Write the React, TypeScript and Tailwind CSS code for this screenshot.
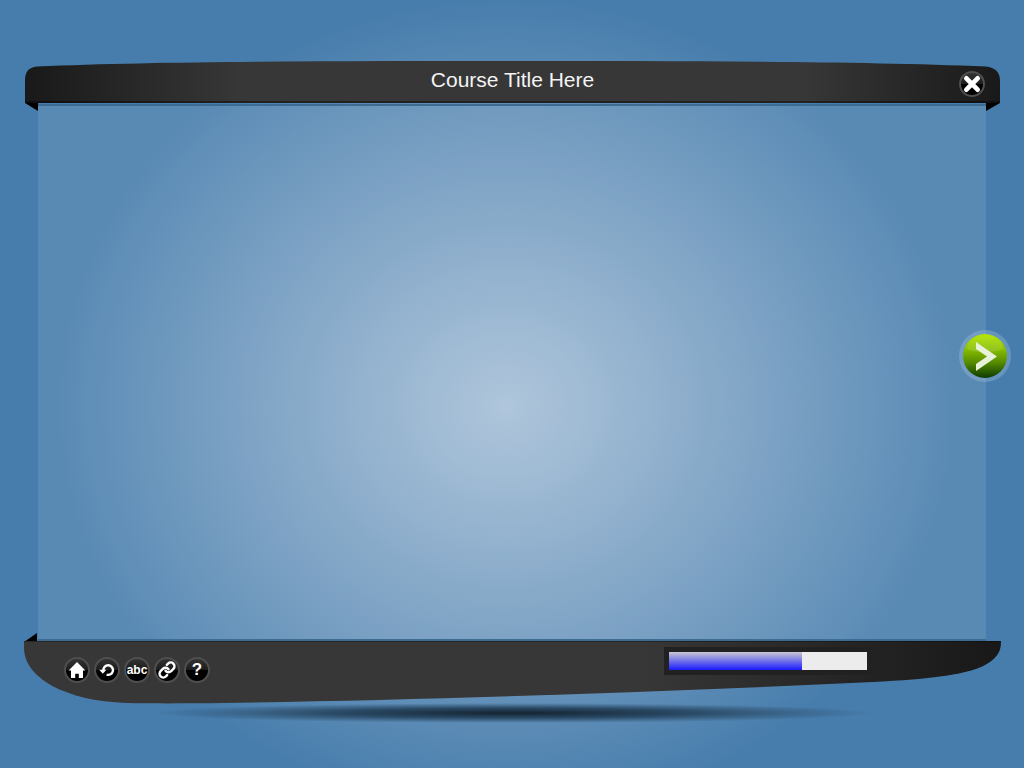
import type { ReactNode } from "react";
import { Link as ChainIcon } from "lucide-react";

type RoundButtonProps = { label: string; children: ReactNode };

function RoundButton({ label, children }: RoundButtonProps) {
  return (
    <button
      type="button"
      aria-label={label}
      className="flex size-[26px] shrink-0 items-center justify-center rounded-full border-2 border-[#4f4f4f] bg-linear-to-b from-[#343434] from-0% via-[#1c1c1c] via-50% to-black to-50% text-white"
    >
      {children}
    </button>
  );
}

function HomeIcon() {
  return (
    <svg viewBox="0 0 18 18" className="size-[18px] shrink-0" fill="currentColor" aria-hidden="true">
      <path d="M9 1 17.4 9.4H15V17H10.8V12.8H7.2V17H3V9.4H.6Z" />
    </svg>
  );
}

function ReplayIcon() {
  return (
    <svg viewBox="0 0 18 18" className="size-[18px] shrink-0" fill="none" aria-hidden="true">
      <path d="M5.4 9.4A4.8 4.8 0 1 1 8.6 13.6" stroke="currentColor" strokeWidth="2.4" />
      <path d="M1.2 8.8H8.4L4.8 12.8Z" fill="currentColor" />
    </svg>
  );
}

function CloseIcon() {
  return (
    <svg viewBox="0 0 18 18" className="size-[18px] shrink-0" fill="none" aria-hidden="true">
      <path d="M3.4 3.4 14.6 14.6M14.6 3.4 3.4 14.6" stroke="currentColor" strokeWidth="4.8" strokeLinecap="round" />
    </svg>
  );
}

function TitleBar() {
  return (
    <header className="relative flex h-[43px] items-center justify-center">
      <svg viewBox="0 0 977 43" preserveAspectRatio="none" className="absolute inset-0 size-full" aria-hidden="true">
        <defs>
          <linearGradient id="titleFill">
            <stop offset="0" stopColor="#191919" />
            <stop offset="0.22" stopColor="#373737" />
            <stop offset="0.8" stopColor="#373737" />
            <stop offset="1" stopColor="#191919" />
          </linearGradient>
        </defs>
        <path
          d="M1 42V20C1 11 4 6.5 13 5.5C140 0 330 0 488 0C646 0 830 0 962 5.5C971 6.5 976 11 976 20V42Z"
          fill="url(#titleFill)"
        />
        <path d="M1 40H976V42H1Z" fill="#000" fillOpacity="0.4" />
      </svg>
      <h1 className="relative pb-[6px] text-[21px] leading-6 text-[#f4f4f4]">Course Title Here</h1>
      <div className="absolute top-[10px] right-4">
        <RoundButton label="Close">
          <CloseIcon />
        </RoundButton>
      </div>
    </header>
  );
}

function Stage() {
  return (
    <section aria-label="Course content" className="relative mr-[15px] ml-[14px] flex-1 border-y-2 border-[#3d6b91] bg-white/10 bg-clip-padding">
      <svg viewBox="0 0 13 8" className="absolute -top-[3px] -left-[13px] h-2 w-[13px]" aria-hidden="true">
        <path d="M0 0H13V8Z" />
      </svg>
      <svg viewBox="0 0 14 8" className="absolute -top-[3px] -right-[14px] h-2 w-[14px]" aria-hidden="true">
        <path d="M0 0H14L0 8Z" />
      </svg>
      <svg viewBox="0 0 13 9" className="absolute -bottom-[3px] -left-[14px] h-[9px] w-[13px]" aria-hidden="true">
        <path d="M0 9 13 0V9Z" />
      </svg>
      <button type="button" aria-label="Next" className="absolute top-[42%] -right-[25px] size-[52px] rounded-full">
        <svg viewBox="0 0 52 52" className="size-full" aria-hidden="true">
          <defs>
            <linearGradient id="nextFill" x2="0" y2="1">
              <stop offset="0" stopColor="#b4e600" />
              <stop offset="0.35" stopColor="#86bd00" />
              <stop offset="0.65" stopColor="#568b00" />
              <stop offset="1" stopColor="#0d3a00" />
            </linearGradient>
            <linearGradient id="nextGloss" x2="0" y2="1">
              <stop offset="0" stopColor="#fff" stopOpacity="0.05" />
              <stop offset="1" stopColor="#fff" stopOpacity="0.14" />
            </linearGradient>
          </defs>
          <circle cx="26" cy="26" r="26" fill="#a9c4e4" fillOpacity="0.33" />
          <circle cx="26" cy="26" r="22" fill="url(#nextFill)" />
          <path d="M8 19C10 1 42 1 44 19C34 23 18 23 8 19Z" fill="url(#nextGloss)" />
          <path d="M17 12 38 26.5 17 41V34L28 26.5 17 19Z" fill="#e8f1d9" />
        </svg>
      </button>
    </section>
  );
}

function ControlBar({ progress }: { progress: number }) {
  return (
    <footer className="relative flex h-[63px] items-start justify-between pr-[129px] pl-10">
      <svg viewBox="0 0 977 63" preserveAspectRatio="none" className="absolute inset-0 size-full" aria-hidden="true">
        <defs>
          <linearGradient id="controlFill">
            <stop offset="0" stopColor="#373737" />
            <stop offset="0.63" stopColor="#373737" />
            <stop offset="1" stopColor="#181818" />
          </linearGradient>
        </defs>
        <path
          d="M0 0H977C977 10 974 15 966 21C948 34 905 38 849 41C640 51 400 59 200 62C160 62.5 120 62.5 103 62C40 60 0 36 0 7Z"
          fill="url(#controlFill)"
        />
        <path d="M0 0H977V1H0Z" fill="#000" fillOpacity="0.3" />
      </svg>
      <nav aria-label="Course tools" className="relative flex gap-1 pt-4">
        <RoundButton label="Home">
          <HomeIcon />
        </RoundButton>
        <RoundButton label="Replay">
          <ReplayIcon />
        </RoundButton>
        <RoundButton label="Glossary">
          <span className="text-[12px] leading-3 font-bold">abc</span>
        </RoundButton>
        <RoundButton label="Links">
          <ChainIcon className="size-[18px] shrink-0" strokeWidth={3.2} aria-hidden="true" />
        </RoundButton>
        <RoundButton label="Help">
          <span className="text-[17px] leading-4 font-bold">?</span>
        </RoundButton>
      </nav>
      <div className="relative mt-[6px] bg-[#212121] p-[5px]">
        <div
          role="progressbar"
          aria-label="Course progress"
          aria-valuenow={progress}
          aria-valuemin={0}
          aria-valuemax={100}
          className="h-[18px] w-[198px] bg-[#ececec]"
        >
          <div className="h-full bg-linear-to-b/srgb from-[#c8c8d2] to-[#1a1aff]" style={{ width: `${progress}%` }} />
        </div>
      </div>
    </footer>
  );
}

export default function App() {
  return (
    <main className="flex min-h-screen flex-col bg-[#477dac] bg-[radial-gradient(ellipse_450px_408px_at_506px_406px,#a6bfd7,#477dac)] pt-[61px] pr-[23px] pb-[45px] pl-6 font-['Liberation_Sans',Arial,sans-serif]">
      <TitleBar />
      <Stage />
      <ControlBar progress={67} />
      <div className="mx-auto -mt-px h-5 w-[74%] bg-[radial-gradient(closest-side,#142330,#2a4a66_50%,transparent)]" />
    </main>
  );
}
